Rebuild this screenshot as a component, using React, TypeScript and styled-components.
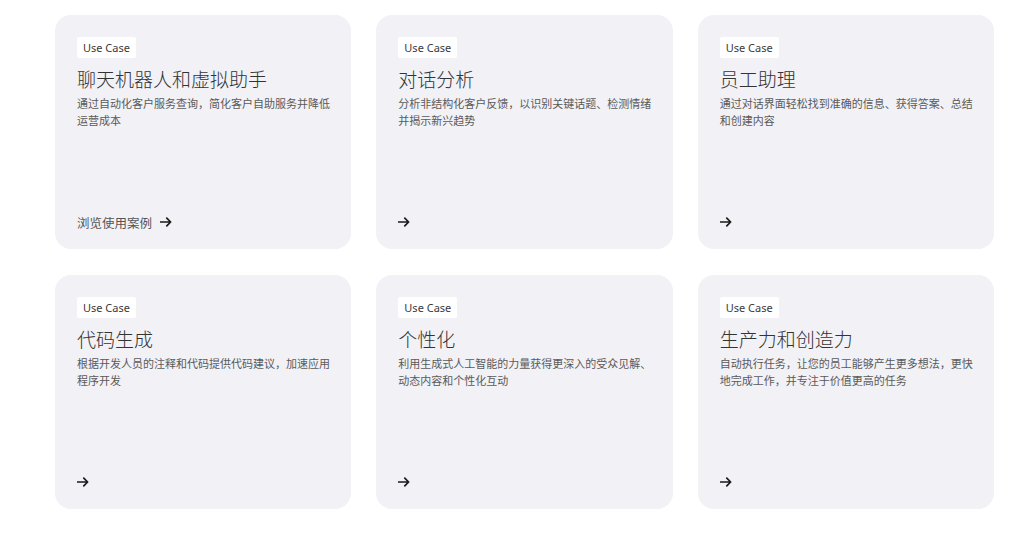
import { FC } from 'react'
import styled, { createGlobalStyle } from 'styled-components'

interface IUseCase {
  title: string
  text: string
  link?: string
}

const cases: IUseCase[] = [
  {
    title: '聊天机器人和虚拟助手',
    text: '通过自动化客户服务查询，简化客户自助服务并降低运营成本',
    link: '浏览使用案例',
  },
  {
    title: '对话分析',
    text: '分析非结构化客户反馈，以识别关键话题、检测情绪并揭示新兴趋势',
  },
  {
    title: '员工助理',
    text: '通过对话界面轻松找到准确的信息、获得答案、总结和创建内容',
  },
  {
    title: '代码生成',
    text: '根据开发人员的注释和代码提供代码建议，加速应用程序开发',
  },
  {
    title: '个性化',
    text: '利用生成式人工智能的力量获得更深入的受众见解、动态内容和个性化互动',
  },
  {
    title: '生产力和创造力',
    text: '自动执行任务，让您的员工能够产生更多想法，更快地完成工作，并专注于价值更高的任务',
  },
]

const Arrow: FC = () => (
  <svg width="12" height="10" viewBox="0 0 12 10" fill="none">
    <path
      d="M0.5 5H10.5M6.8 1.2L10.6 5L6.8 8.8"
      stroke="#1a1a1a"
      strokeWidth="1.7"
      strokeLinecap="round"
      strokeLinejoin="round"
    />
  </svg>
)

const App: FC = () => {
  return (
    <>
      <GlobalStyle />
      <Page>
        <Grid>
          {cases.map((item) => (
            <Card key={item.title}>
              <Badge>Use Case</Badge>
              <Title>{item.title}</Title>
              <Description>{item.text}</Description>
              <Link href="#">
                {item.link && <span>{item.link}</span>}
                <Arrow />
              </Link>
            </Card>
          ))}
        </Grid>
      </Page>
    </>
  )
}

export default App

const GlobalStyle = createGlobalStyle`
  body {
    margin: 0;
    background: #ffffff;
    font-family: "Noto Sans", "Noto Sans CJK SC", sans-serif;
  }
`
const Page = styled.div`
  padding: 15px 30px 30px 55px;
`
const Grid = styled.div`
  display: grid;
  width: 939px;
  grid-template-columns: repeat(3, 1fr);
  grid-auto-rows: 234px;
  column-gap: 25px;
  row-gap: 26px;
`
const Card = styled.div`
  display: flex;
  flex-direction: column;
  align-items: flex-start;
  background: #f1f1f6;
  border-radius: 16px;
  padding: 22px 18px 19px 22px;
  box-sizing: border-box;
`
const Badge = styled.span`
  display: inline-flex;
  align-items: center;
  height: 21px;
  padding: 0 6px;
  background: #ffffff;
  border-radius: 2px;
  font-size: 11px;
  color: #3a3a3a;
`
const Title = styled.h3`
  margin: 9px 0 2px;
  font-size: 19px;
  line-height: 26px;
  font-weight: 300;
  color: #333333;
`
const Description = styled.p`
  margin: 0;
  font-size: 11px;
  line-height: 17px;
  color: #5a5a5a;
`
const Link = styled.a`
  margin-top: auto;
  display: inline-flex;
  align-items: center;
  gap: 8px;
  height: 16px;
  font-size: 12.5px;
  color: #555555;
  text-decoration: none;
`
